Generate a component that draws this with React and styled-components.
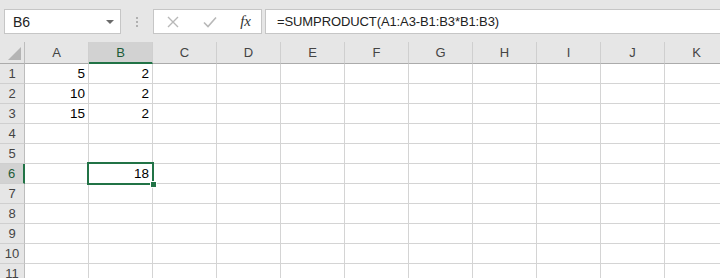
import React from "react";
import styled, { createGlobalStyle } from "styled-components";

const Global = createGlobalStyle`
  html, body { margin: 0; padding: 0; background: #ffffff; }
  body { width: 720px; height: 278px; overflow: hidden; font-family: "Liberation Sans", Arial, sans-serif; }
`;

const Page = styled.div`
  width: 720px;
  height: 278px;
  overflow: hidden;
  display: flex;
  flex-direction: column;
`;

const Toolbar = styled.div`
  height: 42px;
  flex: none;
  background: #e6e6e6;
  display: flex;
  align-items: flex-start;
  padding: 9px 0 0 4px;
  box-sizing: border-box;
`;

const Box = styled.div`
  height: 25px;
  box-sizing: border-box;
  background: #ffffff;
  border: 1px solid #c6c6c6;
  display: flex;
  align-items: center;
  font-size: 14px;
  color: #222;
`;

const NameBox = styled(Box)`
  width: 117px;
  padding: 0 6px 0 8px;
  justify-content: space-between;
`;

const Caret = styled.span`
  width: 0;
  height: 0;
  border-left: 4px solid transparent;
  border-right: 4px solid transparent;
  border-top: 4px solid #6a6a6a;
`;

const Dots = styled.div`
  width: 32px;
  height: 25px;
  display: flex;
  flex-direction: column;
  align-items: center;
  justify-content: center;
  gap: 2px;
  & > span { width: 2px; height: 2px; background: #b0b0b0; }
`;

const FxBox = styled(Box)`
  width: 109px;
  padding: 0 10px 0 12px;
  justify-content: space-between;
`;

const FxText = styled.span`
  font-family: "Liberation Serif", "Times New Roman", serif;
  font-style: italic;
  font-size: 15px;
  color: #333;
`;

const FormulaBox = styled(Box)`
  flex: 1;
  margin-left: 3px;
  padding-left: 11px;
  border-right: none;
  font-size: 13px;
  letter-spacing: -0.1px;
  color: #222;
`;

const Grid = styled.div`
  display: grid;
  grid-template-columns: 25px repeat(11, 64px);
  grid-template-rows: 22px;
  grid-auto-rows: 20px;
  font-size: 13px;
`;

const Corner = styled.div`
  background: #e6e6e6;
  border-right: 1px solid #bdbdbd;
  border-bottom: 1px solid #ababab;
  box-sizing: border-box;
  position: relative;
  &::after {
    content: "";
    position: absolute;
    right: 3px;
    bottom: 3px;
    width: 0;
    height: 0;
    border-left: 13px solid transparent;
    border-bottom: 13px solid #b4b4b4;
  }
`;

const ColHead = styled.div`
  background: ${(p) => (p.$sel ? "#d2d2d2" : "#e6e6e6")};
  border-right: 1px solid #cfcfcf;
  border-bottom: ${(p) => (p.$sel ? "2px solid #217346" : "1px solid #ababab")};
  box-sizing: border-box;
  display: flex;
  align-items: center;
  justify-content: center;
  color: ${(p) => (p.$sel ? "#1d5b38" : "#444")};
  padding-top: ${(p) => (p.$sel ? "1px" : "0")};
`;

const RowHead = styled.div`
  background: ${(p) => (p.$sel ? "#d2d2d2" : "#e6e6e6")};
  border-right: ${(p) => (p.$sel ? "2px solid #217346" : "1px solid #bdbdbd")};
  border-bottom: 1px solid #cfcfcf;
  box-sizing: border-box;
  display: flex;
  align-items: center;
  justify-content: center;
  color: ${(p) => (p.$sel ? "#1d5b38" : "#444")};
  font-size: 13px;
`;

const Cell = styled.div`
  position: relative;
  z-index: ${(p) => (p.$sel ? 2 : 0)};
  background: #ffffff;
  border-right: 1px solid #d4d4d4;
  border-bottom: 1px solid #d4d4d4;
  box-sizing: border-box;
  display: flex;
  align-items: flex-end;
  justify-content: flex-end;
  padding: 0 3px 3px 0;
  color: #000;
  font-size: 13.5px;
  line-height: 13px;
`;

const Selection = styled.div`
  position: absolute;
  top: -2px;
  left: -2px;
  right: -2px;
  bottom: -2px;
  border: 2px solid #217346;
  pointer-events: none;
`;

const Handle = styled.div`
  position: absolute;
  right: -5px;
  bottom: -5px;
  width: 5px;
  height: 5px;
  background: #217346;
  border: 1px solid #ffffff;
`;

const cols = ["A", "B", "C", "D", "E", "F", "G", "H", "I", "J", "K"];
const data = {
  "1": { A: "5", B: "2" },
  "2": { A: "10", B: "2" },
  "3": { A: "15", B: "2" },
  "6": { B: "18" },
};

export default function App() {
  const rows = Array.from({ length: 11 }, (_, i) => String(i + 1));
  return (
    <Page>
      <Global />
      <Toolbar>
        <NameBox>
          <span>B6</span>
          <Caret />
        </NameBox>
        <Dots>
          <span />
          <span />
          <span />
        </Dots>
        <FxBox>
          <svg width="14" height="14" viewBox="0 0 14 14">
            <path d="M2 2 L12 12 M12 2 L2 12" stroke="#b8b8b8" strokeWidth="1.4" fill="none" />
          </svg>
          <svg width="16" height="14" viewBox="0 0 16 14">
            <path d="M2 7.5 L6 11.5 L14 2.5" stroke="#b8b8b8" strokeWidth="1.6" fill="none" />
          </svg>
          <FxText>fx</FxText>
        </FxBox>
        <FormulaBox>=SUMPRODUCT(A1:A3-B1:B3*B1:B3)</FormulaBox>
      </Toolbar>
      <Grid>
        <Corner />
        {cols.map((c) => (
          <ColHead key={c} $sel={c === "B"}>
            {c}
          </ColHead>
        ))}
        {rows.map((r) => (
          <React.Fragment key={r}>
            <RowHead $sel={r === "6"}>{r}</RowHead>
            {cols.map((c) => {
              const v = data[r] && data[r][c];
              const sel = r === "6" && c === "B";
              return (
                <Cell key={c} $sel={sel}>
                  {v}
                  {sel && (
                    <Selection>
                      <Handle />
                    </Selection>
                  )}
                </Cell>
              );
            })}
          </React.Fragment>
        ))}
      </Grid>
    </Page>
  );
}
